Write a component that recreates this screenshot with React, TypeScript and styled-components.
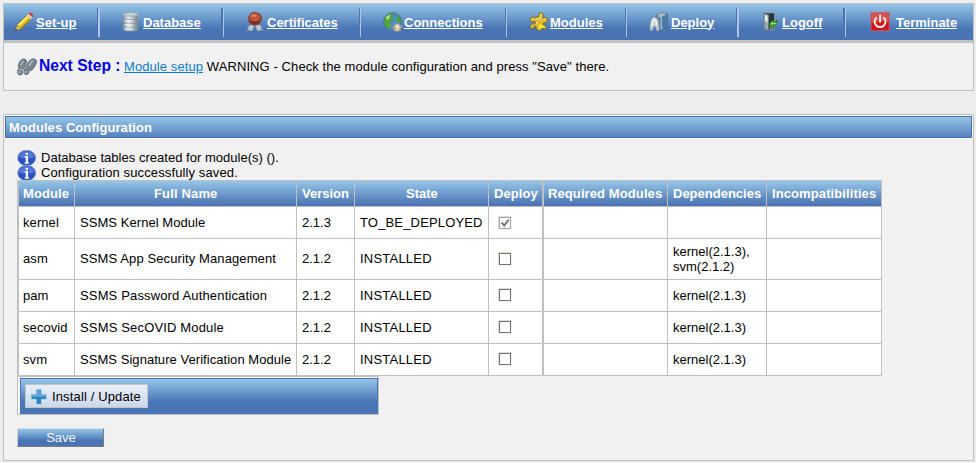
import React from 'react';
import styled, { createGlobalStyle } from 'styled-components';

const GlobalStyle = createGlobalStyle`
  * { box-sizing: border-box; }
  body {
    margin: 0;
    background: #ededed;
    color: #000;
    font: 13px/15px "Liberation Sans", Arial, sans-serif;
  }
`;

const grey = '#c0c0c0';
const barGradient = 'linear-gradient(to bottom, #95c6e8 0%, #4a75b5 68%, #4a75b5 100%)';
const headGradient = 'linear-gradient(to bottom, #95c6e8 0%, #4870b1 100%)';

const Page = styled.div`
  width: 976px;
  height: 463px;
  padding: 3px 2px 0 3px;
  overflow: hidden;
`;

const Panel = styled.section<{ $height: number }>`
  width: 971px;
  height: ${p => p.$height}px;
  border: 1px solid ${grey};
  background: #f1f1f1;
`;

const Nav = styled.nav`
  display: flex;
  height: 39px;
  background: ${barGradient};
  background-size: 100% 36px;
  border-bottom: 3px solid ${grey};
`;

const NavItem = styled.div<{ $width: number; $pad: number }>`
  display: flex;
  align-items: center;
  width: ${p => p.$width}px;
  height: 36px;
  padding-left: ${p => p.$pad}px;
  flex: none;
`;

const Divider = styled.div<{ $dark: number; $light: number }>`
  width: ${p => p.$dark + p.$light}px;
  height: 29px;
  margin-top: 4px;
  flex: none;
  border-left: ${p => p.$dark}px solid #4a75b5;
  border-right: ${p => p.$light}px solid #aec5e5;
`;

const NavIcon = styled.span<{ $slot: number }>`
  width: ${p => p.$slot}px;
  height: 20px;
  flex: none;
`;

const NavLink = styled.a`
  color: #fff;
  font-weight: bold;
  text-decoration: underline;
`;

const Icon = styled.svg`
  display: block;
  width: 20px;
  height: 20px;
  flex: none;
`;

const NextStep = styled.div`
  display: flex;
  align-items: center;
  height: 47px;
  padding: 0 0 0 13px;
`;

const StepTitle = styled.span`
  width: 85px;
  margin-left: 2px;
  padding-bottom: 2px;
  color: #0000ee;
  font-size: 15.6px;
  line-height: 18px;
  font-weight: bold;
  white-space: nowrap;
`;

const StepText = styled.span`
  white-space: pre;
  letter-spacing: 0.088px;
  a { color: #0b7bd0; text-decoration: underline; }
`;

const ConfigPanel = styled(Panel)`
  margin-top: 23px;
  padding: 1px;
`;

const PanelTitle = styled.h1`
  margin: 0;
  height: 22px;
  padding: 0 3px;
  border: 1px solid #4670b2;
  outline: 1px solid #fbfbfb;
  background: linear-gradient(to bottom, #95c6e8, #5783be);
  color: #fff;
  font-size: 13px;
  line-height: 21px;
  letter-spacing: 0.07px;
`;

const PanelBody = styled.div`
  padding: 12px 0 0 12px;
`;

const Message = styled.div<{ $tracking: number }>`
  display: flex;
  height: 15px;
  gap: 4px;
  letter-spacing: ${p => p.$tracking}px;
`;

const InfoBadge = styled.span`
  width: 20px;
  height: 15px;
  overflow: hidden;
`;

const Table = styled.div`
  display: grid;
  gap: 1px;
  width: 865px;
  padding: 1px;
  background: ${grey};
`;

const Row = styled.div<{ $height: number }>`
  display: grid;
  grid-template-columns: 56px 221px 57px 133px 53px 124px 98px 114px;
  column-gap: 1px;
  height: ${p => p.$height}px;
`;

const Cell = styled.div<{ $thick?: boolean; $pad?: number; $lift?: number; $tracking?: number }>`
  display: flex;
  align-items: center;
  padding: 0 0 ${p => p.$lift ?? 0}px ${p => p.$pad ?? 5}px;
  border-left: ${p => (p.$thick ? `1px solid ${grey}` : '0')};
  background: #fff;
  white-space: pre;
  letter-spacing: ${p => p.$tracking ?? 0}px;
`;

const HeadCell = styled(Cell)`
  justify-content: flex-start;
  background: ${headGradient} padding-box;
  color: #fff;
  font-weight: bold;
`;

const Check = styled.span<{ $disabled: boolean }>`
  display: block;
  width: 13px;
  height: 13px;
  margin-left: 9px;
  padding: 0;
  border: 1px solid #dddcd6;
  border-width: 1px 0 0 1px;
  box-shadow: inset 0 0 0 1px ${p => (p.$disabled ? '#a5a5a0' : '#77766e')}, 1px 1px 0 #f4f4f1;
  background: #fff;
  svg { display: block; width: 12px; height: 12px; }
`;

const ActionBar = styled.div`
  width: 362px;
  height: 39px;
  padding: 1px 0 0 2px;
  border: 1px solid ${grey};
  background: #f8f8f8;
`;

const ActionInner = styled.div`
  height: 36px;
  padding: 5px 4px;
  border: 1px solid #4772b4;
  background: ${barGradient};
`;

const InstallButton = styled.button`
  display: flex;
  align-items: center;
  width: 123px;
  height: 24px;
  padding: 1px 0 0 3px;
  border: 1px solid #c2c4c8;
  background: linear-gradient(#e9eff8, #cbd9eb);
  color: #000;
  font: inherit;
  letter-spacing: 0.14px;
  gap: 3px;
  white-space: nowrap;
`;

const SaveButton = styled.button`
  display: block;
  width: 87px;
  height: 19px;
  margin-top: 13px;
  padding: 0 0 0 1px;
  border: 1px solid;
  border-color: #e0e0e0 #808080 #808080 #d0d0d0;
  background: ${barGradient};
  color: #f1f4fb;
  font: inherit;
  line-height: 16px;
`;

const Pencil = () => (
  <Icon viewBox="0 0 20 20">
    <path d="M1 18.8 3 13 13.6 2.6l4.2 3.8L7 17z" fill="#e8c51c" stroke="#7b6820" strokeWidth=".8" />
    <path d="M4.4 13.4 14.3 3.9" stroke="#fff17d" strokeWidth="2" />
    <path d="M6.4 16 16.8 6.4" stroke="#c39c16" strokeWidth="1.2" />
    <path d="m1 18.8 2-5.3 3.8 3.5z" fill="#dccb9c" stroke="#857147" strokeWidth=".7" />
    <path d="m.8 19 1-2.6 1.8 1.7z" fill="#403a30" />
    <path d="m12.7 3.4 1.8-1.9 4.2 3.8-1.9 2z" fill="#ddd" stroke="#999" strokeWidth=".5" />
    <path d="m14.3 1.7 1.2-.9q3.3.2 3.7 3.5l-.8 1z" fill="#d5392f" />
  </Icon>
);

const Database = () => (
  <Icon viewBox="0 0 20 20">
    <defs>
      <linearGradient id="steel"><stop stopColor="#8596a0" /><stop offset=".35" stopColor="#e9f0f2" /><stop offset="1" stopColor="#71828b" /></linearGradient>
    </defs>
    <path d="M2.3 2.4v15.4q0 1.2 7.2 1.2t7.4-1.2V2.4" fill="url(#steel)" stroke="#8797a2" strokeWidth=".8" />
    <ellipse cx="9.6" cy="2.4" rx="7.3" ry="1.8" fill="#c6d2d8" stroke="#9aa8b0" strokeWidth=".8" />
    <path d="M2.5 6.5c1 1.6 13 1.6 14 0M2.5 10.8c1 1.6 13 1.6 14 0M2.5 15c1 1.6 13 1.6 14 0" fill="none" stroke="#7f909b" strokeWidth=".9" />
    <path d="M4 8c3 .8 6 .8 8 0M4 12.3c3 .8 6 .8 8 0M4 16.5c3 .8 6 .8 8 0" fill="none" stroke="#fbffff" strokeWidth=".9" />
  </Icon>
);

const Certificate = () => (
  <Icon viewBox="0 0 20 20">
    <path d="m6.5 11.5-3.8 3.3.6 1.7-2.3 2h4l1.7 1 2.9-5zm6.5 0 4 3.3-.7 1.7 2.2 2h-4l-1.7 1-2.7-5z" fill="#b9c6d3" stroke="#70839b" strokeWidth=".8" />
    <path d="M6 1.2 10 .5l4.2.9 2.1 3v4.2L14 12.2l-4.2 1-4.2-1-2-3.5.3-4.3z" fill="#98412f" stroke="#71403f" strokeWidth=".8" />
    <ellipse cx="9.8" cy="5.2" rx="5.2" ry="3.9" fill="#c2543a" />
    <ellipse cx="8.6" cy="3.8" rx="2.9" ry="1.3" fill="#d98269" />
    <path d="M5.3 10q4.7 2.2 9.2-.3" fill="none" stroke="#702818" strokeWidth="1.4" />
  </Icon>
);

const Globe = () => (
  <Icon viewBox="0 0 20 20">
    <circle cx="9.5" cy="9.6" r="8.9" fill="#4c91d2" stroke="#3d6b83" strokeWidth=".8" />
    <path d="M2 5.5 6 1.7l4 .4L8.5 4.6l2 1.6-1.3 3-2.8.3 1.5 3-2 5.1L2.4 14 1 10zM12.5 2l4.3 3.8 1.2 5.2-3-.4-2-3.2 1-2.5z" fill="#54a53b" stroke="#448e45" strokeWidth=".5" />
    <path d="m2.8 5.3 4.3-3-.4 3-2.5 3z" fill="#b9e384" />
    <path d="m9.9 14.4 2.3-3.3 4 .5 3 3.2-2.3 4.5-4.7.3-2.5-2z" fill="#a9aba0" stroke="#7c8480" strokeWidth=".8" />
    <path d="m12.3 15.5 1.8-2.3v3m1.6-2.6v3l-2.4 1.8" fill="none" stroke="#f3eac0" strokeWidth="1.3" />
  </Icon>
);

const Puzzle = () => (
  <Icon viewBox="0 0 20 20">
    <path d="m6.4 5.4 3.8-.9Q9 1.3 11.2.7q3.7-.4 2.7 3.8l-.2 1.7 3.8-.8q1.4 1.8.7 4.6l-4 1.2q-.8 1.7 1.3 2 2.6.4 1.8 2.9-1.4 2-3.7.3l-1.5.4-.6 2.4-4.5-2q1.4-3.1-1.2-3-2.1.8-1.3 3L.8 15.6l1.5-3.3q1.3-1.4 3.2-.1 1.7-.2 1-2-1.3-1.3-3.2-.3Q1 9 1.3 6.4q1.5-2.6 4-.8z" fill="#dcb92d" stroke="#75652c" strokeWidth=".9" />
    <path d="m7.6 7 3.8-1.1.8-3.8m1.2 5.5 3.5-.7M7.2 12.1l1.2-2.4M2.7 7.1l2.5.3" fill="none" stroke="#f6df70" strokeWidth="1.4" />
    <path d="m10.8 11.4 2.2 2 2.4.9-.7 1.2-2.4.3-.6 1.4-2.2-1z" fill="#fff32a" />
  </Icon>
);

const Deploy = () => (
  <Icon viewBox="0 0 20 20">
    <path d="m7 3 5-2.2 6.7 1-1 13.5-5.6 3.6L9 16z" fill="#60798c" stroke="#4c667b" strokeWidth=".8" />
    <path d="m7.2 3 5-2 6 .9-4.7 2.7z" fill="#a9bdc7" />
    <path d="m13.2 5 4.5-2.6-.9 12.2-3.6 2.4z" fill="#467ea6" />
    <path d="m8.5 4.1 3.8.8v12" fill="none" stroke="#8ec2dd" strokeWidth="1.5" />
    <path d="M1 18.2q-.4-9 3-13 4-.5 5.4 3l.8 9.9-2.2.8-1.4-4.4-2 .2-1 3.5z" fill="#c8d1d6" stroke="#929fa5" strokeWidth=".8" />
    <path d="M2.7 14q.2-5 2.3-7.1Q7.3 8 7.5 13" fill="none" stroke="#fff" strokeWidth="1.1" />
  </Icon>
);

const Logoff = () => (
  <Icon viewBox="0 0 20 20">
    <path d="M3 1h10.5v17H3z" fill="#26323a" stroke="#8e9ba3" strokeWidth=".8" />
    <path d="m3 1 4.8 2v16l-4.8-2.5z" fill="#9dabb3" stroke="#596b77" strokeWidth=".8" />
    <path d="m3.8 3 2.8 1v6L3.8 9z" fill="#e4ecef" />
    <path d="M9 14h4v4H9z" fill="#70808a" />
    <path d="m15.4 8.3.1 2-3 .2V8.2L7.8 12l4.7 4v-2.7q4.2.1 3.6-5z" fill="#4ec12b" stroke="#1c6a14" strokeWidth=".8" />
    <path d="m9.7 11.8 2.3-1.6v1.6l3.5-.4" fill="none" stroke="#afed82" />
  </Icon>
);

const Power = () => (
  <Icon viewBox="0 0 20 20">
    <path d="M1 .5h18.3v18.3H1z" fill="#cf1717" stroke="#b56b80" strokeWidth=".8" />
    <path d="M1.4 1h17.5v8.5q-10-1.5-17.5 2z" fill="#d9504e" />
    <path d="M6.2 5.9a5.4 5.4 0 1 0 7.8 0M10.1 3.6v6.1" fill="none" stroke="#f7e9e9" strokeWidth="2" strokeLinecap="round" />
  </Icon>
);

const Steps = () => (
  <Icon viewBox="0 0 20 20">
    <g fill="#75848e" stroke="#59666f" strokeWidth=".8">
      <path d="M1.3 8.4Q2.5 2.7 6 2q3.7-.5 3.5 3.2-.7 4.5-2.6 7.1l-5.4-1.1z" />
      <path d="m.9 12.5 4.9 1.3q.2 4.7-3.1 4.2Q-.2 17.6.9 12.5z" />
      <path d="M10 8.2q1.8-5.9 6.4-6.4 4.5.6 2.7 5-1.8 4.5-5 7l-4.8-2.5z" />
      <path d="m8.2 11.6 4.4 2.6q-1.4 4.2-4.3 3.3-2.8-1.4-.1-5.9z" />
    </g>
    <path d="M3.8 8.4Q5 4.8 6.7 3.7M12.3 9q1.2-4 4.1-5.4M2.6 14v2m6.5-1.8-.8 1.6" fill="none" stroke="#a8b6bf" strokeWidth="1.8" />
  </Icon>
);

const Info = () => (
  <Icon viewBox="0 0 20 20">
    <ellipse cx="9.7" cy="8" rx="9" ry="7.7" fill="#2a53bf" stroke="#8195cd" strokeWidth=".9" />
    <path d="M1.6 7Q4 1.2 9.7 1.2T17.8 7Q10 10.5 1.6 7z" fill="#5477d9" />
    <path d="M9.5 6.8v6M7.8 6.8h2M7.7 12.9H12" fill="none" stroke="#fff" strokeWidth="1.5" />
    <path d="M10 6v6.8" stroke="#fff" strokeWidth="2" />
    <circle cx="9.8" cy="3.9" r="1.2" fill="#fff" />
  </Icon>
);

const Plus = () => (
  <Icon viewBox="0 0 20 20">
    <path d="M7.2 2.2h5.2v5h5.1v5.2h-5.1v5.1H7.2v-5.1H2.1V7.2h5.1z" fill="#2d80bd" stroke="#b5d7ec" strokeWidth="1" />
    <path d="M8 3h3.6v5h5v1.9H3V8h5z" fill="#59a1d0" />
  </Icon>
);

const navItems = [
  { label: 'Set-up', icon: <Pencil />, width: 93, pad: 10, slot: 22, dark: 1, light: 2 },
  { label: 'Database', icon: <Database />, width: 121, pad: 21, slot: 22, dark: 2, light: 1 },
  { label: 'Certificates', icon: <Certificate />, width: 135, pad: 21, slot: 22, dark: 1, light: 1 },
  { label: 'Connections', icon: <Globe />, width: 144, pad: 22, slot: 21, dark: 1, light: 1 },
  { label: 'Modules', icon: <Puzzle />, width: 118, pad: 22, slot: 21, dark: 1, light: 1 },
  { label: 'Deploy', icon: <Deploy />, width: 109, pad: 22, slot: 22, dark: 1, light: 2 },
  { label: 'Logoff', icon: <Logoff />, width: 104, pad: 22, slot: 21, dark: 2, light: 1 },
  { label: 'Terminate', icon: <Power />, width: 127, pad: 24, slot: 26, dark: 0, light: 0 },
];

const columns = [
  { name: 'Module', pad: 4, tracking: 0.08 },
  { name: 'Full Name', pad: 79, tracking: 0.15 },
  { name: 'Version', pad: 5, tracking: 0 },
  { name: 'State', pad: 51, tracking: 0 },
  { name: 'Deploy', pad: 5, tracking: 0.1 },
  { name: 'Required Modules', pad: 4, tracking: 0.1 },
  { name: 'Dependencies', pad: 5, tracking: 0 },
  { name: 'Incompatibilities', pad: 5, tracking: 0.1 },
];

const modules = [
  { id: 'kernel', name: 'SSMS Kernel Module', version: '2.1.3', state: 'TO_BE_DEPLOYED', deploy: true, deps: '', height: 31, lift: 0, boxLift: 0, tracking: 0.06 },
  { id: 'asm', name: 'SSMS App Security Management', version: '2.1.2', state: 'INSTALLED', deploy: false, deps: 'kernel(2.1.3),\nsvm(2.1.2)', height: 40, lift: 1, boxLift: 1, tracking: 0.11 },
  { id: 'pam', name: 'SSMS Password Authentication', version: '2.1.2', state: 'INSTALLED', deploy: false, deps: 'kernel(2.1.3)', height: 31, lift: 0, boxLift: 2, tracking: 0.15 },
  { id: 'secovid', name: 'SSMS SecOVID Module', version: '2.1.2', state: 'INSTALLED', deploy: false, deps: 'kernel(2.1.3)', height: 31, lift: 0, boxLift: 2, tracking: 0.16 },
  { id: 'svm', name: 'SSMS Signature Verification Module', version: '2.1.2', state: 'INSTALLED', deploy: false, deps: 'kernel(2.1.3)', height: 31, lift: 0, boxLift: 2, tracking: 0.05 },
];

const messages = [
  { text: 'Database tables created for module(s) ().', tracking: 0.02 },
  { text: 'Configuration successfully saved.', tracking: 0.12 },
];

export default function App() {
  return (
    <Page>
      <GlobalStyle />
      <Panel $height={88}>
        <Nav>
          {navItems.map(item => (
            <React.Fragment key={item.label}>
              <NavItem $width={item.width} $pad={item.pad}>
                <NavIcon $slot={item.slot}>{item.icon}</NavIcon>
                <NavLink>{item.label}</NavLink>
              </NavItem>
              {item.light > 0 && <Divider $dark={item.dark} $light={item.light} />}
            </React.Fragment>
          ))}
        </Nav>
        <NextStep>
          <Steps />
          <StepTitle>Next Step :</StepTitle>
          <StepText><a>Module setup</a> WARNING - Check the module configuration and press "Save" there.</StepText>
        </NextStep>
      </Panel>
      <ConfigPanel $height={347}>
        <PanelTitle>Modules Configuration</PanelTitle>
        <PanelBody>
          {messages.map(m => (
            <Message key={m.text} $tracking={m.tracking}>
              <InfoBadge><Info /></InfoBadge>
              {m.text}
            </Message>
          ))}
          <Table>
            <Row $height={25}>
              {columns.map((c, i) => (
                <HeadCell key={c.name} $thick={i === 0 || i === 5} $pad={c.pad} $tracking={c.tracking}>{c.name}</HeadCell>
              ))}
            </Row>
            {modules.map(m => (
              <Row key={m.id} $height={m.height}>
                <Cell $thick $pad={4} $lift={m.lift} $tracking={0.08}>{m.id}</Cell>
                <Cell $lift={m.lift} $tracking={m.tracking}>{m.name}</Cell>
                <Cell $lift={m.lift}>{m.version}</Cell>
                <Cell $lift={m.lift} $tracking={m.state === 'INSTALLED' ? 0.22 : 0.16}>{m.state}</Cell>
                <Cell $pad={0} $lift={m.boxLift}>
                  <Check $disabled={m.deploy}>
                    {m.deploy && (
                      <svg viewBox="0 0 12 12">
                        <path d="m2.6 5.5 2.6 3.2 4.5-6" fill="none" stroke="#777" strokeWidth="2" />
                      </svg>
                    )}
                  </Check>
                </Cell>
                <Cell $thick />
                <Cell>{m.deps}</Cell>
                <Cell />
              </Row>
            ))}
          </Table>
          <ActionBar>
            <ActionInner>
              <InstallButton><Plus />Install / Update</InstallButton>
            </ActionInner>
          </ActionBar>
          <SaveButton>Save</SaveButton>
        </PanelBody>
      </ConfigPanel>
    </Page>
  );
}
